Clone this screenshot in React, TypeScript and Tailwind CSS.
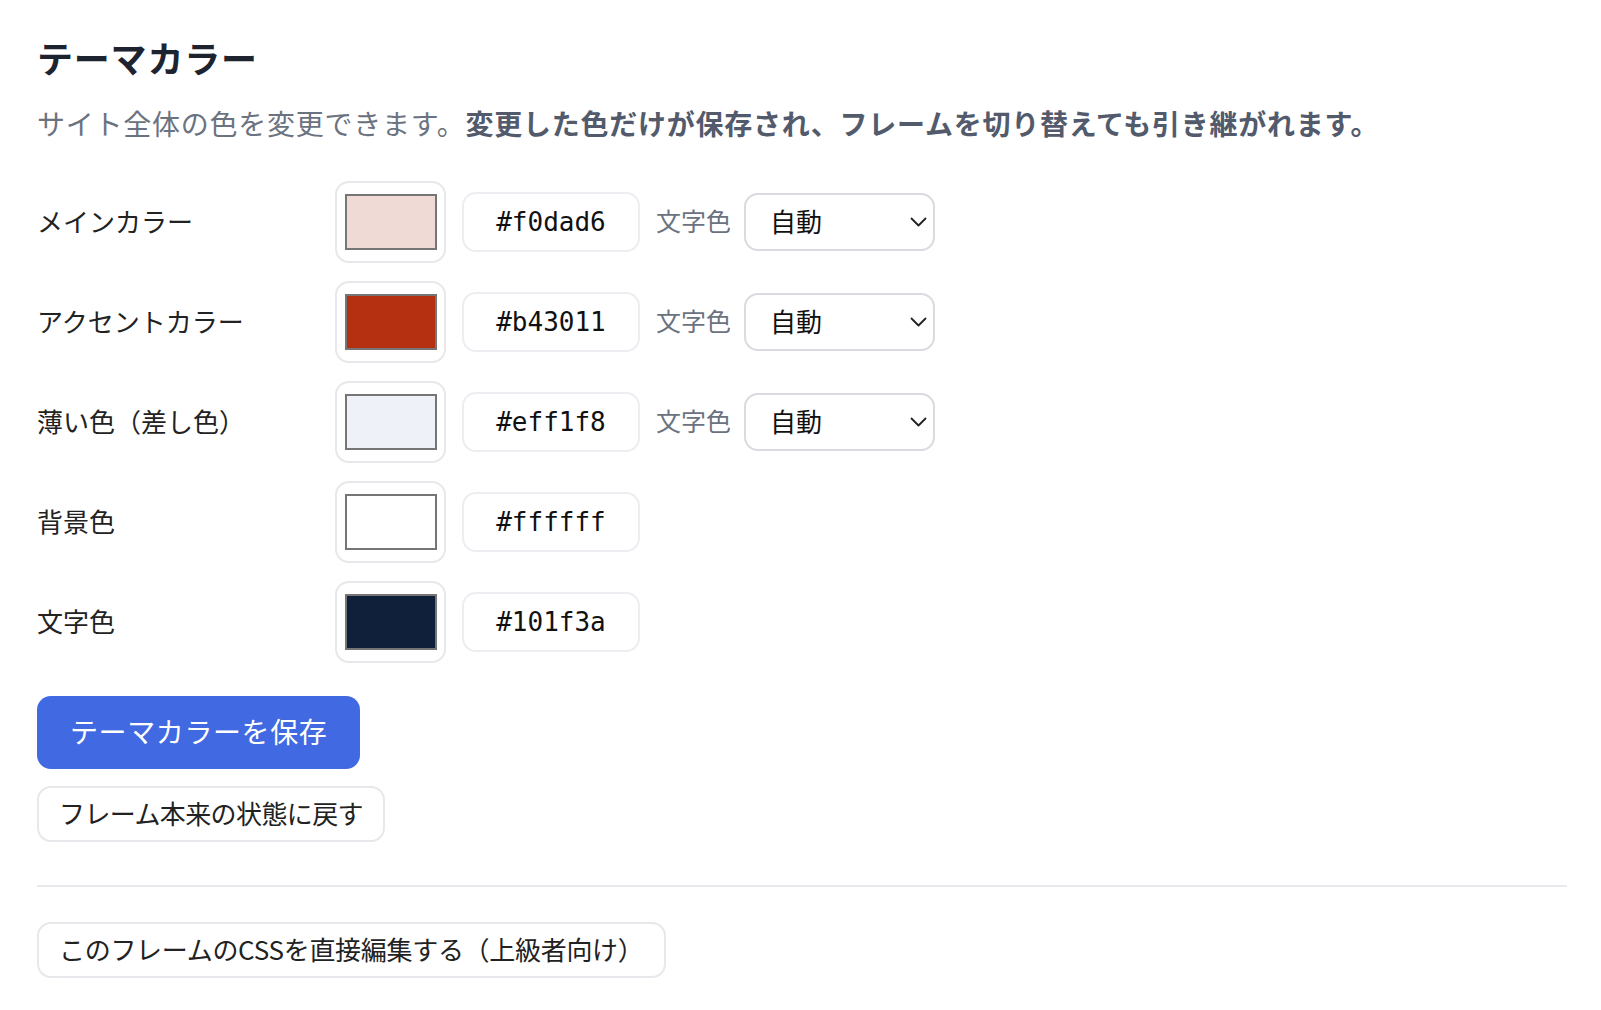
import React, { useState } from 'react'

type Row = {
  key: string
  label: string
  value: string
  textColor?: boolean
}

const rows: Row[] = [
  { key: 'main', label: 'メインカラー', value: '#f0dad6', textColor: true },
  { key: 'accent', label: 'アクセントカラー', value: '#b43011', textColor: true },
  { key: 'light', label: '薄い色（差し色）', value: '#eff1f8', textColor: true },
  { key: 'bg', label: '背景色', value: '#ffffff' },
  { key: 'text', label: '文字色', value: '#101f3a' },
]

const ChevronDown = () => (
  <svg width="17" height="10" viewBox="0 0 17 10" fill="none" stroke="#222" strokeWidth="1.8" strokeLinecap="round" strokeLinejoin="round">
    <path d="M1.5 1.5l7 7 7-7" />
  </svg>
)

const ColorRow = ({ row }: { row: Row }) => {
  const [value, setValue] = useState(row.value)
  return (
    <div className="flex items-center">
      <div className="w-[298px] pb-[4px] text-[26px] text-[#222]">{row.label}</div>
      <div className="w-[111px] h-[82px] rounded-[14px] border-2 border-[#e7e8eb] bg-white flex items-center justify-center">
        <div className="w-[92px] h-[56px] border-2 border-[#767676]" style={{ backgroundColor: value }} />
      </div>
      <input
        value={value}
        onChange={(e) => setValue(e.target.value)}
        className="ml-[16px] w-[178px] h-[60px] rounded-[14px] border-2 border-[#eceef1] bg-white text-center text-[26px] text-[#111] outline-none font-['DejaVu_Sans_Mono',monospace]"
      />
      {row.textColor && (
        <>
          <span className="ml-[16px] pb-[3px] text-[25px] text-[#6b7280]">文字色</span>
          <div className="relative ml-[13px]">
            <select className="appearance-none w-[191px] h-[58px] rounded-[14px] border-2 border-[#d9dbe0] bg-white pl-[24px] pb-[4px] text-[26px] text-[#111] outline-none">
              <option>自動</option>
              <option>白</option>
              <option>黒</option>
            </select>
            <span className="pointer-events-none absolute right-[8px] top-1/2 -translate-y-1/2 flex">
              <ChevronDown />
            </span>
          </div>
        </>
      )}
    </div>
  )
}

const App = () => {
  return (
    <div className="min-h-screen bg-white px-[37px] pt-[35px] pr-[34px] font-['Noto_Sans_CJK_JP','Noto_Sans',sans-serif]">
      <h2 className="text-[36px] leading-[44px] font-bold tracking-[0.8px] text-[#1e2330]">テーマカラー</h2>
      <p className="mt-[24px] text-[28px] leading-[40px] tracking-[0.75px] text-[#6b7280]">
        サイト全体の色を変更できます。
        <strong className="font-bold text-[#525a6b]">変更した色だけが保存され、フレームを切り替えても引き継がれます。</strong>
      </p>

      <div className="mt-[38px] flex flex-col gap-[18px]">
        {rows.map((row) => (
          <ColorRow key={row.key} row={row} />
        ))}
      </div>

      <div className="mt-[33px] flex flex-col items-start gap-[17px]">
        <button className="h-[73px] px-[33px] pb-[3px] rounded-[14px] bg-[#4169e1] text-white text-[28px] tracking-[0.6px]">
          テーマカラーを保存
        </button>
        <button className="h-[56px] px-[20px] pb-[3px] rounded-[14px] border-2 border-[#e7e8eb] bg-white text-[26px] tracking-[-0.6px] text-[#222]">
          フレーム本来の状態に戻す
        </button>
      </div>

      <hr className="mt-[43px] border-0 h-[2px] bg-[#e8e9ec]" />

      <button className="mt-[35px] h-[56px] px-[20px] pb-[3px] rounded-[14px] border-2 border-[#e7e8eb] bg-white text-[26px] tracking-[-0.3px] text-[#222]">
        このフレームのCSSを直接編集する（上級者向け）
      </button>
    </div>
  )
}

export default App
